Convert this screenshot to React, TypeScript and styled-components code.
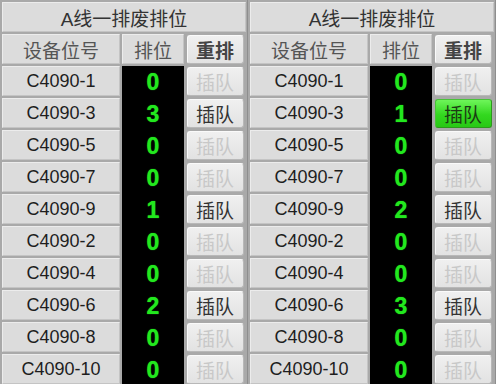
import React from 'react';
import styled, {createGlobalStyle} from "styled-components";

const GlobalStyle = createGlobalStyle`
    html, body {
        margin: 0;
        padding: 0;
        background: #a9a9a9;
    }
    body {
        font-family: "Liberation Sans", "Noto Sans CJK SC", sans-serif;
    }
`

type Slot = {id: string, rank: number, active?: boolean, highlight?: boolean}

const leftSlots: Slot[] = [
    {id: 'C4090-1', rank: 0},
    {id: 'C4090-3', rank: 3, active: true},
    {id: 'C4090-5', rank: 0},
    {id: 'C4090-7', rank: 0},
    {id: 'C4090-9', rank: 1, active: true},
    {id: 'C4090-2', rank: 0},
    {id: 'C4090-4', rank: 0},
    {id: 'C4090-6', rank: 2, active: true},
    {id: 'C4090-8', rank: 0},
    {id: 'C4090-10', rank: 0},
]

const rightSlots: Slot[] = [
    {id: 'C4090-1', rank: 0},
    {id: 'C4090-3', rank: 1, active: true, highlight: true},
    {id: 'C4090-5', rank: 0},
    {id: 'C4090-7', rank: 0},
    {id: 'C4090-9', rank: 2, active: true},
    {id: 'C4090-2', rank: 0},
    {id: 'C4090-4', rank: 0},
    {id: 'C4090-6', rank: 3, active: true},
    {id: 'C4090-8', rank: 0},
    {id: 'C4090-10', rank: 0},
]

function RejectPanel({title, slots}: {title: string, slots: Slot[]}) {
    return (
        <Panel>
            <TitleCell>{title}</TitleCell>
            <HeaderCell>设备位号</HeaderCell>
            <HeaderCell>排位</HeaderCell>
            <ButtonSlot><QueueButton $bold>重排</QueueButton></ButtonSlot>

            <Column>
                {slots.map(s => <LabelCell key={s.id}>{s.id}</LabelCell>)}
            </Column>
            <RankColumn>
                {slots.map(s => <Rank key={s.id}>{s.rank}</Rank>)}
            </RankColumn>
            <Column>
                {slots.map(s =>
                    <ButtonSlot key={s.id}>
                        <QueueButton $disabled={!s.active} $highlight={s.highlight}>插队</QueueButton>
                    </ButtonSlot>
                )}
            </Column>
        </Panel>
    )
}

function App() {
    return (
        <>
            <GlobalStyle/>
            <Screen>
                <RejectPanel title="A线一排废排位" slots={leftSlots}/>
                <RejectPanel title="A线一排废排位" slots={rightSlots}/>
            </Screen>
        </>
    );
}

const Screen = styled.div`
    display: grid;
    grid-template-columns: 248px 248px;
    width: 496px;
    height: 384px;
    overflow: hidden;
`

const Panel = styled.div`
    display: grid;
    grid-template-columns: 118px 62px 60px;
    grid-template-rows: 30px 30px 1fr;
    column-gap: 2px;
    row-gap: 2px;
    padding: 2px 0 0 2px;
    border-right: 1px solid #8e8e8e;
`

const Cell = styled.div`
    display: flex;
    align-items: center;
    justify-content: center;
    box-sizing: border-box;
    height: 30px;
    background: #dcdcdc;
    border-top: 1px solid #ececec;
    border-left: 1px solid #ececec;
    border-bottom: 1px solid #c4c4c4;
    border-right: 1px solid #c4c4c4;
    font-size: 18px;
    color: #222;
`

const TitleCell = styled(Cell)`
    grid-column: 1 / -1;
    font-size: 19px;
    color: #333;
`

const HeaderCell = styled(Cell)`
    font-size: 19px;
    color: #555;
`

const LabelCell = styled(Cell)`
    color: #1e1e1e;
`

const Column = styled.div`
    display: flex;
    flex-direction: column;
    gap: 2px;
`

const RankColumn = styled.div`
    display: flex;
    flex-direction: column;
    gap: 2px;
    background: #000;
    margin-bottom: -2px;
`

const Rank = styled.div`
    display: flex;
    align-items: center;
    justify-content: center;
    height: 30px;
    padding-top: 2px;
    box-sizing: border-box;
    font-size: 23px;
    font-weight: bold;
    color: #22e81e;
    text-shadow: 0 0 1px #22e81e;
`

const ButtonSlot = styled.div`
    display: flex;
    align-items: center;
    justify-content: center;
    height: 30px;
    padding-right: 2px;
`

const QueueButton = styled.div<{$disabled?: boolean, $highlight?: boolean, $bold?: boolean}>`
    display: flex;
    align-items: center;
    justify-content: center;
    box-sizing: border-box;
    width: 57px;
    height: 29px;
    border-radius: 3px;
    font-size: 19px;
    font-weight: ${p => p.$bold ? 'bold' : 'normal'};
    color: ${p => p.$disabled ? '#c8c8c8' : p.$highlight ? '#1c3a14' : p.$bold ? '#444' : '#333'};
    background: ${p => p.$highlight
            ? 'linear-gradient(#6ef55a, #33d81f 55%, #28c815)'
            : 'linear-gradient(#f0f0f0, #e2e2e2)'};
    border: 1px solid ${p => p.$highlight ? '#2c9a1c' : '#b8b8b8'};
    border-top-color: ${p => p.$highlight ? '#49c239' : '#fafafa'};
    border-left-color: ${p => p.$highlight ? '#49c239' : '#fafafa'};
`

export default App;
